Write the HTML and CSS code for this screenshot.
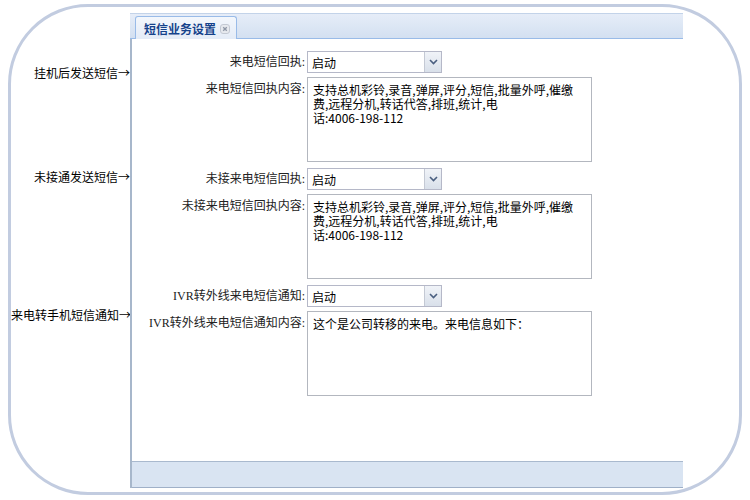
FILE: index.html
```html
<!DOCTYPE html>
<html lang="zh-CN">
<head>
    <meta charset="UTF-8" />
    <meta name="viewport" content="width=device-width, initial-scale=1.0" />
    <title>短信业务设置</title>
    <link rel="stylesheet" href="styles.css">
</head>
<body>
    <div class="frame">
        <div class="side">
            <p class="note note-hangup">挂机后发送短信→</p>
            <p class="note note-missed">未接通发送短信→</p>
            <p class="note note-forward">来电转手机短信通知→</p>
        </div>

        <div class="panel">
            <div class="tabstrip">
                <div class="tab">
                    <span class="tab-title">短信业务设置</span>
                    <span class="tab-close">
                        <svg width="10" height="10" viewBox="0 0 10 10">
                            <rect x="0.5" y="0.5" width="9" height="9" rx="2.5" fill="#e6e9ee" stroke="#c3c9d3" />
                            <path d="M3.2 3.2 L6.8 6.8 M6.8 3.2 L3.2 6.8" stroke="#8e97a6" stroke-width="1.3" />
                        </svg>
                    </span>
                </div>
            </div>

            <div class="panel-main">
                <form class="form">
                    <div class="row row-select">
                        <label>来电短信回执:</label>
                        <div class="combo">
                            <input type="text" value="启动" readonly />
                            <span class="trigger">
                                <svg width="9" height="6" viewBox="0 0 9 6"><path d="M1 1 L4.5 4.5 L8 1" fill="none" stroke="#4a5f80" stroke-width="1.6" /></svg>
                            </span>
                        </div>
                    </div>
                    <div class="row row-area">
                        <label>来电短信回执内容:</label>
                        <textarea readonly>支持总机彩铃,录音,弹屏,评分,短信,批量外呼,催缴
费,远程分机,转话代答,排班,统计,电
话:4006-198-112</textarea>
                    </div>

                    <div class="row row-select">
                        <label>未接来电短信回执:</label>
                        <div class="combo">
                            <input type="text" value="启动" readonly />
                            <span class="trigger">
                                <svg width="9" height="6" viewBox="0 0 9 6"><path d="M1 1 L4.5 4.5 L8 1" fill="none" stroke="#4a5f80" stroke-width="1.6" /></svg>
                            </span>
                        </div>
                    </div>
                    <div class="row row-area">
                        <label>未接来电短信回执内容:</label>
                        <textarea readonly>支持总机彩铃,录音,弹屏,评分,短信,批量外呼,催缴
费,远程分机,转话代答,排班,统计,电
话:4006-198-112</textarea>
                    </div>

                    <div class="row row-select">
                        <label>IVR转外线来电短信通知:</label>
                        <div class="combo">
                            <input type="text" value="启动" readonly />
                            <span class="trigger">
                                <svg width="9" height="6" viewBox="0 0 9 6"><path d="M1 1 L4.5 4.5 L8 1" fill="none" stroke="#4a5f80" stroke-width="1.6" /></svg>
                            </span>
                        </div>
                    </div>
                    <div class="row row-area">
                        <label>IVR转外线来电短信通知内容:</label>
                        <textarea readonly>这个是公司转移的来电。来电信息如下：</textarea>
                    </div>
                </form>
                <div class="foot"></div>
            </div>
        </div>
    </div>
</body>
</html>
```

FILE: styles.css
```css
* {
    margin: 0;
    padding: 0;
    box-sizing: border-box;
}

body {
    background-color: #fff;
    width: 750px;
    height: 500px;
    overflow: hidden;
    font-family: "Noto Sans CJK SC", sans-serif;
    font-size: 12px;
    color: #000;
}

.frame {
    display: flex;
    width: 734px;
    height: 491px;
    margin: 4px 8px;
    padding-top: 6px;
    border: 3px solid #c2cce0;
    border-radius: 80px;
}

/* notes on the left */
.side {
    width: 119px;
    display: flex;
    flex-direction: column;
}

.note {
    text-align: right;
    line-height: 16px;
    white-space: nowrap;
    color: #000;
}

.note-hangup {
    margin-top: 52px;
}

.note-missed {
    margin-top: 88px;
}

.note-forward {
    margin-top: 122px;
}

/* panel */
.panel {
    width: 553px;
    height: 475px;
    display: flex;
    flex-direction: column;
}

.tabstrip {
    height: 26px;
    padding-left: 5px;
    padding-top: 2px;
    background: linear-gradient(#e6edf8, #d3e0f1);
    border-top: 1px solid #c3d3e9;
    border-bottom: 1px solid #99bbe8;
    display: flex;
    align-items: flex-end;
}

.tab {
    height: 23px;
    margin-bottom: -1px;
    padding: 0 6px 0 8px;
    display: flex;
    align-items: center;
    gap: 4px;
    background: linear-gradient(#f3f7fc, #e4ecf7);
    border: 1px solid #99bbe8;
    border-bottom: none;
    border-radius: 3px 3px 0 0;
}

.tab-title {
    font-weight: bold;
    color: #15428b;
    font-size: 12px;
}

.tab-close {
    display: flex;
    margin-top: 1px;
}

.panel-main {
    flex: 1;
    display: flex;
    flex-direction: column;
    border-left: 2px solid #a7b7cb;
    background-color: #fff;
}

.form {
    flex: 1;
    padding-top: 12px;
}

.row {
    display: flex;
    align-items: flex-start;
}

.row label {
    width: 173px;
    margin-right: 2px;
    text-align: right;
    line-height: 22px;
    white-space: nowrap;
    font-family: "Liberation Serif", "Noto Sans CJK SC", serif;
    color: #222;
}

.row-select {
    margin-bottom: 4px;
}

.row-area {
    margin-bottom: 6px;
}

.row-area label {
    padding-top: 1px;
}

.combo {
    width: 135px;
    height: 22px;
    display: flex;
    border: 1px solid #b5b8c8;
    background-color: #fff;
}

.combo input {
    flex: 1;
    width: 100px;
    border: none;
    outline: none;
    padding: 0 4px;
    font-family: "Noto Sans CJK SC", sans-serif;
    font-size: 12px;
    color: #000;
    background: transparent;
}

.trigger {
    width: 17px;
    display: flex;
    align-items: center;
    justify-content: center;
    border-left: 1px solid #c4c9d4;
    background: linear-gradient(#f0f3f8, #d9e0ea);
}

.row textarea {
    width: 285px;
    height: 85px;
    border: 1px solid #b3b7bf;
    padding: 5px 5px;
    resize: none;
    overflow: hidden;
    font-family: "Noto Sans CJK SC", sans-serif;
    font-size: 12px;
    line-height: 14px;
    color: #000;
    outline: none;
}

.foot {
    height: 27px;
    background-color: #d9e4f2;
    border-top: 1px solid #a9b9ce;
    border-bottom: 1px solid #9fb0c8;
}
```
